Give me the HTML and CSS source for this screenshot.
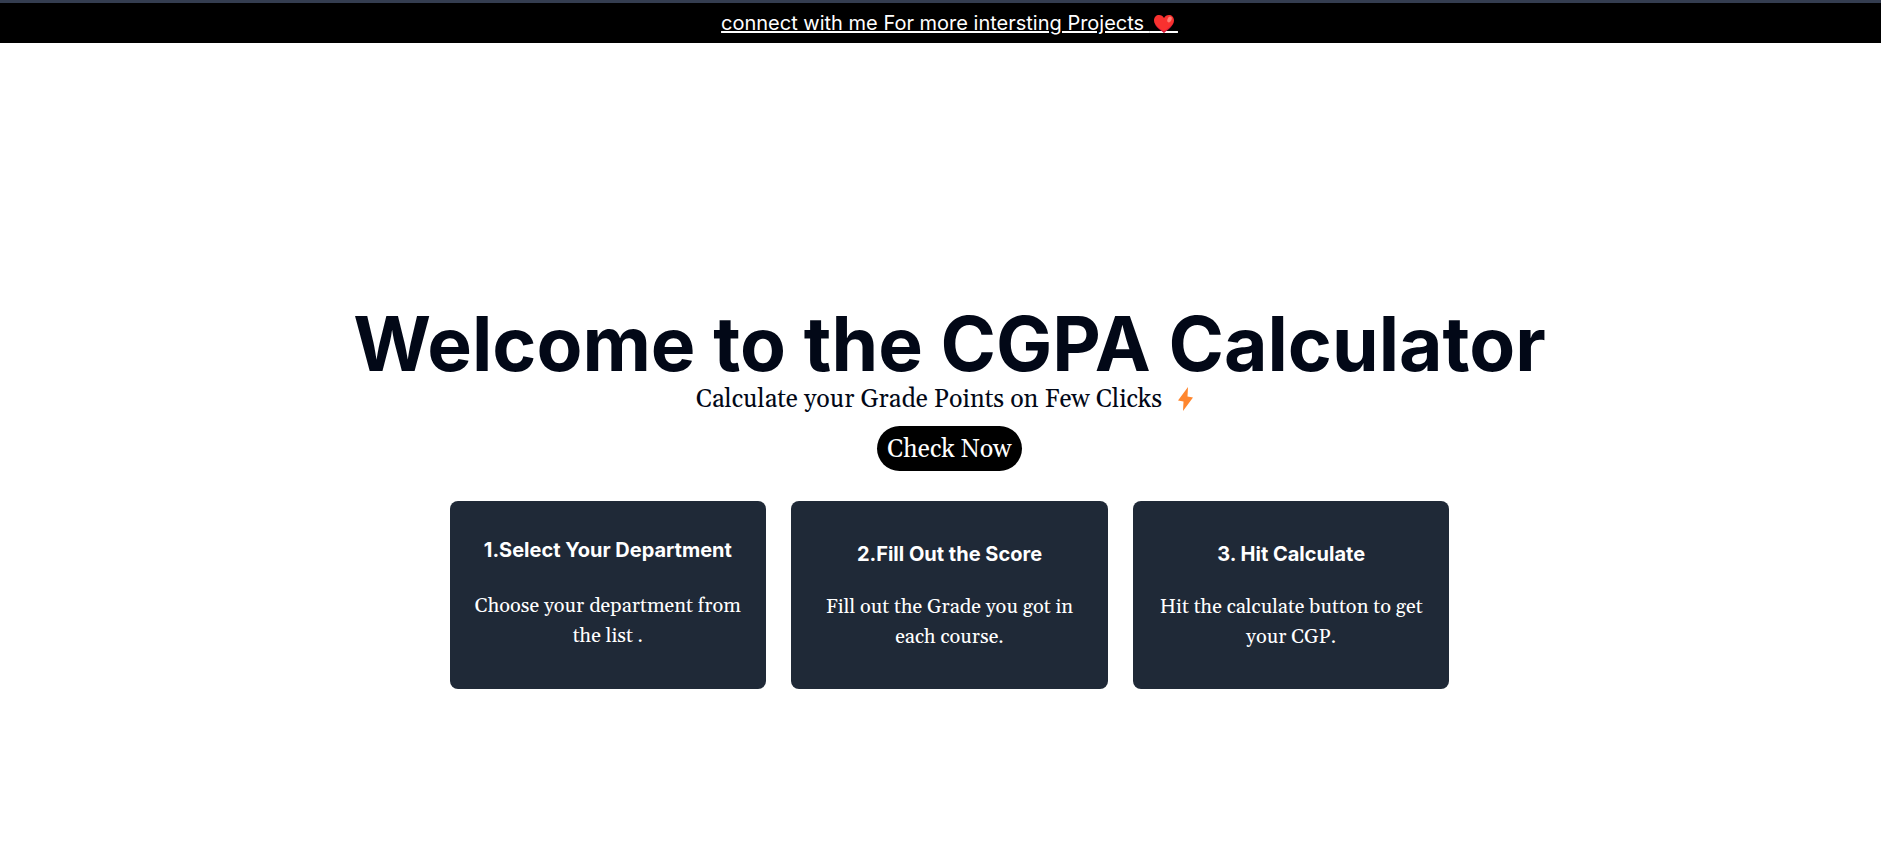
FILE: index.html
```html
<!DOCTYPE html>
<html lang="en">
<head>
<meta charset="utf-8">
<title>CGPA Calculator</title>
<meta name="viewport" content="width=device-width, initial-scale=1">
<link rel="stylesheet" href="styles.css">
</head>
<body>
<header class="banner">
  <a class="banner-link" href="#connect">connect with me For more intersting Projects <span class="heart-slot">&nbsp;&nbsp;&nbsp;&nbsp;&nbsp;<svg class="heart" viewBox="0 0 20 18" aria-hidden="true"><path d="M10 18C7 15 0 11 0 5.500C0 2 2.300 0 5 0C7.400 0 9 1.200 10 3C11 1.200 12.600 0 15 0C17.700 0 20 2 20 5.500C20 11 13 15 10 18Z" fill="#f8312f"/><path d="M0.600 8.500C2 13 7 15 10 18C13 15 18 12.500 19.600 7.500C17.500 11.500 13 14 10 16.500C7 14 2.500 12 0.600 8.500Z" fill="#ca0b4a" opacity=".6"/><ellipse cx="15.500" cy="4.500" rx="2" ry="3" transform="rotate(25 15.500 4.500)" fill="#ff8075"/></svg></span></a>
</header>
<main class="hero">
  <h1 class="title">Welcome to the CGPA Calculator</h1>
  <p class="subtitle">Calculate your Grade Points on Few Clicks
    <svg class="bolt" viewBox="0 0 15 24" aria-hidden="true"><path d="M10 0L0 13.500L5.500 14.500L5 24L15 10.500L9.500 9.500Z" fill="#ff862e"/></svg>
  </p>
  <button class="check" type="button">Check Now</button>
  <section class="steps">
    <article class="card card-first">
      <h2 class="card-title">1.Select Your Department</h2>
      <p class="card-text">Choose your department from the list .</p>
    </article>
    <article class="card">
      <h2 class="card-title">2.Fill Out the Score</h2>
      <p class="card-text">Fill out the Grade you got in each course.</p>
    </article>
    <article class="card">
      <h2 class="card-title">3. Hit Calculate</h2>
      <p class="card-text">Hit the calculate button to get your CGP.</p>
    </article>
  </section>
</main>
</body>
</html>
```
FILE: styles.css
```css
* {
  box-sizing: border-box;
}

body {
  margin: 0;
  background: #fff;
  color: #020817;
  font-family: Inter, sans-serif;
}

h1, h2, p {
  margin: 0;
}

.banner {
  padding: 5px 0 5px 18px;
  border-top: 3px solid #343d50;
  background: #000;
  font-size: 20px;
  line-height: 30px;
  text-align: center;
}

.banner-link {
  color: #fff;
  text-decoration: underline;
}

.heart-slot {
  position: relative;
}

.heart {
  position: absolute;
  top: 4px;
  left: 4px;
  width: 20px;
  height: 18px;
}

.hero {
  display: flex;
  flex-direction: column;
  align-items: center;
  padding: 263px 0 40px 18px;
  text-align: center;
}

.title {
  font-size: 75px;
  font-weight: 700;
  line-height: 75px;
}

.subtitle {
  display: flex;
  align-items: center;
  gap: 16px;
  padding: 2px 10px 0 0;
  font-family: Georgia, Gelasio, "Liberation Serif", serif;
  font-size: 25px;
  line-height: 35px;
}

.bolt {
  width: 15px;
  height: 24px;
  margin-bottom: 4px;
}

.check {
  margin: 8px 0 30px;
  padding: 7px 10px 3px;
  border: 0;
  border-radius: 24px;
  background: #000;
  color: #fff;
  font-family: Georgia, Gelasio, "Liberation Serif", serif;
  font-size: 25px;
  line-height: 35px;
}

.steps {
  display: grid;
  grid-template-columns: repeat(3, 1fr);
  gap: 25px;
  width: 100%;
  max-width: 1000px;
}

.card {
  display: flex;
  flex-direction: column;
  gap: 23px;
  padding: 38px 20px 37px;
  border-radius: 8px;
  background: #1f2937;
  color: #fff;
}

.card-first {
  gap: 26px;
  padding-top: 34px;
}

.card-title {
  font-size: 20px;
  font-weight: 700;
  line-height: 30px;
}

.card-text {
  font-family: Georgia, Gelasio, "Liberation Serif", serif;
  font-size: 20px;
  line-height: 30px;
}
```
